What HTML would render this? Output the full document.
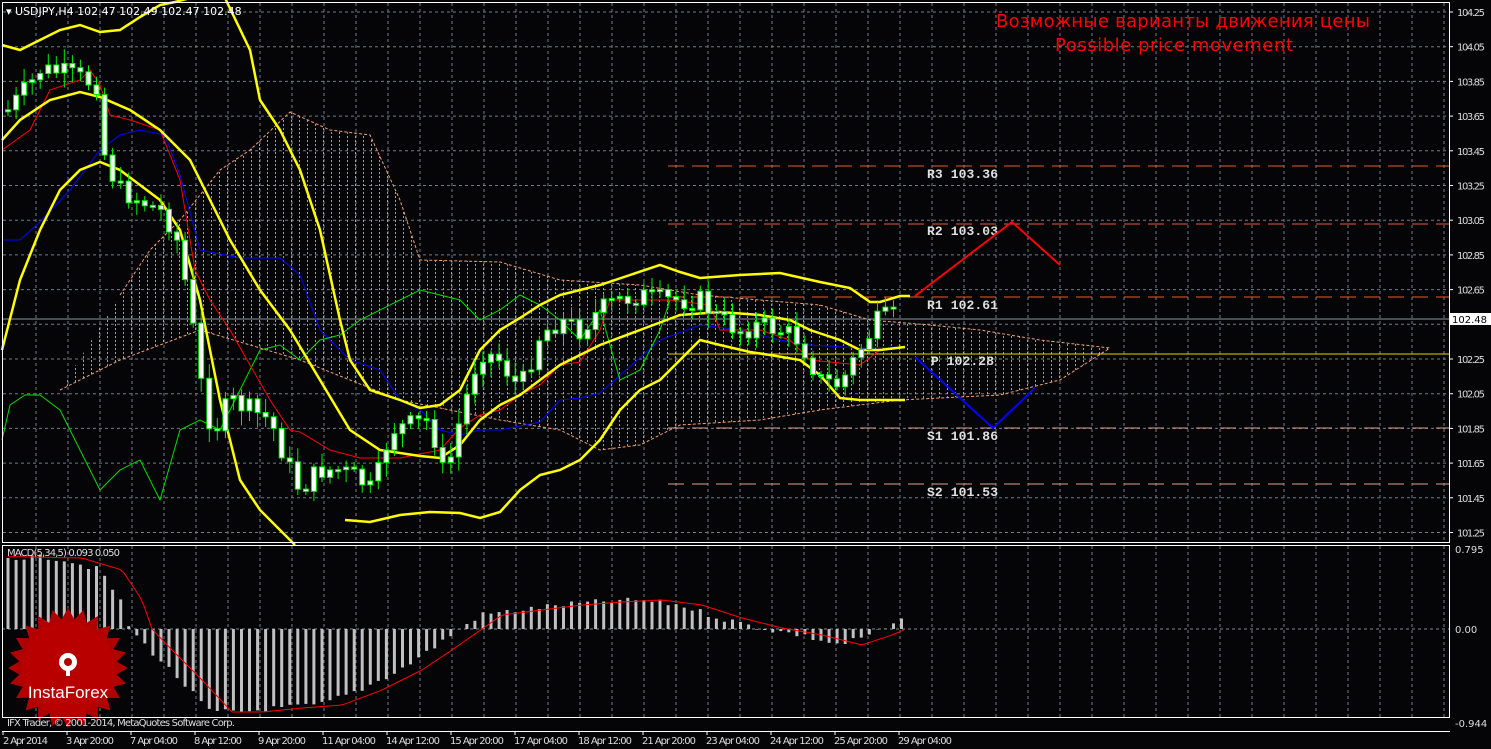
<!DOCTYPE html>
<html><head><meta charset="utf-8"><style>
html,body{margin:0;padding:0;background:#000;width:1491px;height:749px;overflow:hidden}
svg{display:block}
text{font-family:"DejaVu Sans","Liberation Sans",sans-serif}
text.mono{font-family:"Liberation Mono",monospace;font-weight:bold}
</style></head><body>
<svg id="s" width="1491" height="749" viewBox="0 0 1491 749" xmlns="http://www.w3.org/2000/svg">
<defs>
<pattern id="hatch" width="8" height="4" patternUnits="userSpaceOnUse">
<rect x="3" y="0" width="1" height="2" fill="#bbb"/>
</pattern>
</defs>
<rect width="1491" height="749" fill="#050508"/>
<g id="grid" stroke="#6f7d8c" stroke-width="1" stroke-dasharray="3,3"></g>
<polygon fill="url(#hatch)" opacity="0.85" points="120,295 150,250 180,220 220,170 250,150 290,112 330,130 370,135 400,200 420,260 500,262 560,280 640,285 700,295 760,300 820,305 870,320 930,325 980,330 1040,340 1110,348 1060,380 1000,395 900,400 820,410 760,420 680,425 640,445 600,450 560,430 500,420 400,400 300,360 200,330 120,360 60,390"/>
<polyline fill="none" stroke="#f0a070" stroke-dasharray="3,2" points="120,295 150,250 180,220 220,170 250,150 290,112 330,130 370,135 400,200 420,260 500,262 560,280 640,285 700,295 760,300 820,305 870,320 930,325 980,330 1040,340 1110,348"/>
<polyline fill="none" stroke="#f0a070" stroke-dasharray="3,2" points="60,390 120,360 200,330 300,360 400,400 500,420 560,430 600,450 640,445 680,425 760,420 820,410 900,400 1000,395 1060,380 1110,348"/>
<g stroke-dasharray="16,8" stroke-width="1">
<line x1="668" y1="166" x2="1449" y2="166" stroke="#e8602a"/>
<line x1="668" y1="224" x2="1449" y2="224" stroke="#e8602a"/>
<line x1="668" y1="297" x2="1449" y2="297" stroke="#e8602a"/>
<line x1="668" y1="428" x2="1449" y2="428" stroke="#e0a090"/>
<line x1="668" y1="484" x2="1449" y2="484" stroke="#e0a090"/>
</g>
<line x1="668" y1="354" x2="1449" y2="354" stroke="#f0d000"/>
<line x1="2" y1="319" x2="1449" y2="319" stroke="#8899aa"/>
<g fill="#e0e0e0" font-size="13">
<text class="mono" x="927" y="178" textLength="71">R3 103.36</text>
<text class="mono" x="927" y="235" textLength="71">R2 103.03</text>
<text class="mono" x="927" y="309" textLength="71">R1 102.61</text>
<text class="mono" x="931" y="365" textLength="63">P 102.28</text>
<text class="mono" x="927" y="440" textLength="71">S1 101.86</text>
<text class="mono" x="927" y="496" textLength="71">S2 101.53</text>
</g>
<polyline fill="none" stroke="#0000ff" stroke-width="1" points="2,240 20,240 40,222 70,190 100,150 120,135 140,130 165,135 180,175 200,250 240,258 280,258 300,275 320,330 350,360 380,370 400,400 420,410 440,430 460,435 480,430 500,430 540,422 560,400 580,398 600,393 660,340 700,325 740,330 780,340 810,345 860,348 905,347"/>
<polyline fill="none" stroke="#00dd00" stroke-width="1" points="2,440 10,405 25,395 40,395 60,410 80,450 100,490 120,470 140,460 160,500 180,430 200,420 220,430 240,390 260,350 280,345 300,360 320,340 340,335 360,320 380,310 400,300 420,290 440,295 460,300 480,320 500,310 520,295 540,305 560,320 580,340 600,310 620,380 640,370 660,330 670,300"/>
<polyline fill="none" stroke="#ff0000" stroke-width="1" points="2,150 30,130 50,90 80,80 90,70 100,85 110,115 130,120 160,130 180,180 195,270 210,300 230,330 250,365 270,400 290,430 300,432 330,450 360,458 400,458 440,450 460,428 480,415 500,410 520,395 540,385 560,365 580,362 600,330 610,300 640,300 670,300 710,305 720,330 760,330 790,340 810,360 860,365 880,350 905,347"/>
<g fill="none" stroke="#ffff00" stroke-width="2.5">
<polyline points="2,45 20,50 40,40 60,30 80,25 100,32 120,30 140,17 160,5 175,2 190,-2"/>
<polyline points="225,-2 250,50 260,100 280,130 300,170 320,230 340,320 350,360 370,390 400,400 420,408 440,405 460,390 480,350 500,330 520,318 540,305 560,295 580,290 600,285 630,275 660,265 680,272 700,278 740,275 780,273 820,282 850,288 870,302 880,302 900,296 910,296"/>
<polyline points="2,140 20,120 50,100 80,92 100,97 130,110 160,130 190,160 210,200 230,240 260,290 290,330 320,380 350,430 380,450 420,456 440,458 460,445 480,420 500,405 520,395 540,380 560,365 580,355 600,345 640,330 680,315 720,312 760,315 790,320 810,330 840,340 860,350 880,350 905,347"/>
<polyline points="2,350 20,280 40,230 60,190 80,170 100,162 120,170 140,185 160,200 180,230 200,300 220,400 240,480 260,510 280,530 295,545"/>
<polyline points="345,520 370,522 400,515 430,512 460,513 480,518 500,512 520,490 540,475 560,470 580,460 600,440 620,410 640,390 660,380 680,360 700,340 720,345 750,352 770,355 800,360 820,375 840,398 860,400 905,400"/>
</g>
<g id="candles"></g>
<polyline fill="none" stroke="#ff0000" stroke-width="2" points="915,296 1012,222 1060,265"/>
<polyline fill="none" stroke="#0000ff" stroke-width="2" points="915,357 993,428 1035,388"/>
<text x="996" y="27" font-size="18" fill="#ff0000" textLength="374">Возможные варианты движения цены</text>
<text x="1055" y="51" font-size="18" fill="#ff0000" textLength="238">Possible price movement</text>
<text x="6" y="15" font-size="11" fill="#fff">▾ USDJPY,H4  102.47 102.49 102.47 102.48</text>
<line x1="2" y1="629" x2="1449" y2="629" stroke="#7b8a99" stroke-dasharray="3,3"/>
<g id="macd"></g>
<polyline id="sig" fill="none" stroke="#ff0000" stroke-width="1"/>
<g transform="translate(68,668)">
<polygon id="star" fill="#b00000"/>
<circle r="46" fill="#c00000" opacity="0.6"/>
<g fill="#fff">
<circle cx="0" cy="-6" r="9"/>
<rect x="-2" y="-6" width="4" height="14"/>
</g>
<circle cx="0" cy="-6" r="4" fill="#b00000"/>
<text x="0" y="30" text-anchor="middle" font-size="17" fill="#fff" style="font-family:'Liberation Sans',sans-serif">InstaForex</text>
</g>
<text x="7" y="726" font-size="10" fill="#ddd" textLength="228">IFX Trader, © 2001-2014, MetaQuotes Software Corp.</text>
<text x="7" y="556" font-size="10" fill="#ddd" textLength="113">MACD(5,34,5) 0.093 0.050</text>
<rect x="2.5" y="2.5" width="1447" height="540" fill="none" stroke="#fff"/>
<rect x="2.5" y="545.5" width="1447" height="172" fill="none" stroke="#fff"/>
<line x1="2" y1="731.5" x2="1450" y2="731.5" stroke="#fff"/>
<rect x="1450" y="313" width="41" height="12" fill="#fff"/>
<text x="1452" y="323" font-size="10" fill="#000">102.48</text>
<g id="axis" font-size="10" fill="#ddd"></g>
</svg>
<script>
var NS="http://www.w3.org/2000/svg",s=document.getElementById('s');
function el(p,t,a,txt){var e=document.createElementNS(NS,t);for(var k in a)e.setAttribute(k,a[k]);if(txt)e.textContent=txt;p.appendChild(e);return e;}
var g=document.getElementById('grid');
for(var x=36;x<1449;x+=32){el(g,'line',{x1:x,y1:3,x2:x,y2:543});el(g,'line',{x1:x,y1:546,x2:x,y2:718});}
var ax=document.getElementById('axis');
var labs=["104.25","104.05","103.85","103.65","103.45","103.25","103.05","102.85","102.65","102.45","102.25","102.05","101.85","101.65","101.45","101.25"];
for(var i=0;i<16;i++){var y=12+i*34.7;el(g,'line',{x1:3,y1:y,x2:1449,y2:y});if(i!=9)el(ax,'text',{x:1457,y:y+4,textLength:28},labs[i]);el(s,'line',{x1:1450,y1:y,x2:1453,y2:y,stroke:'#fff'});}
el(ax,'text',{x:1455,y:553},"0.795");el(ax,'text',{x:1455,y:633},"0.00");el(ax,'text',{x:1455,y:727},"-0.944");
var d=["2 Apr 2014","3 Apr 20:00","7 Apr 04:00","8 Apr 12:00","9 Apr 20:00","11 Apr 04:00","14 Apr 12:00","15 Apr 20:00","17 Apr 04:00","18 Apr 12:00","21 Apr 20:00","23 Apr 04:00","24 Apr 12:00","25 Apr 20:00","29 Apr 04:00"];
for(var i=0;i<d.length;i++){var w=d[i].length>11?54:48;el(ax,'text',{x:(i==0?3:67+(i-1)*64-1),y:744,textLength:(i==0?45:w)},d[i]);el(s,'line',{x1:3+i*64,y1:731,x2:3+i*64,y2:735,stroke:'#fff'});}
var pts=[[8,110],[30,85],[40,70],[60,72],[100,85],[105,160],[120,190],[140,200],[160,210],[175,230],[185,280],[195,340],[205,410],[215,430],[230,400],[250,410],[270,420],[290,470],[300,490],[320,470],[340,470],[360,480],[370,490],[380,470],[390,430],[410,425],[430,420],[445,480],[460,420],[480,350],[500,360],[520,390],[540,335],[560,320],[580,330],[600,310],[620,300],[640,295],[660,300],[680,300],[700,300],[720,320],[740,330],[760,325],[780,330],[800,340],[820,380],[840,385],[860,350],[880,318],[895,318]];
function py(x){for(var i=1;i<pts.length;i++){if(x<=pts[i][0]){var a=pts[i-1],b=pts[i];return a[1]+(b[1]-a[1])*(x-a[0])/(b[0]-a[0]);}}return 318;}
var cg=document.getElementById('candles'),prev=110,seed=7;
function rnd(){seed=(seed*9301+49297)%233280;return seed/233280;}
for(var x=8;x<=895;x+=8.05){var c=py(x)+(rnd()-0.5)*22,o=prev;var t=Math.min(o,c),b=Math.max(o,c);if(b-t<2)b=t+2;
el(cg,'line',{x1:x.toFixed(1),y1:(t-3-rnd()*12).toFixed(1),x2:x.toFixed(1),y2:(b+3+rnd()*12).toFixed(1),stroke:'#00ee00'});
el(cg,'rect',{x:(x-2.5).toFixed(1),y:t.toFixed(1),width:5,height:(b-t).toFixed(1),fill:'#fff',stroke:'#00ee00','stroke-width':1});prev=c;}
var mp=[[8,557],[60,558],[100,570],[120,600],[130,629],[150,650],[180,680],[210,712],[240,712],[280,708],[320,705],[360,690],[400,670],[430,650],[460,629],[480,615],[520,610],[560,605],[600,602],[640,600],[680,605],[720,618],[760,628],[800,635],[840,645],[870,635],[905,620]];
function my(x){for(var i=1;i<mp.length;i++){if(x<=mp[i][0]){var a=mp[i-1],b=mp[i];return a[1]+(b[1]-a[1])*(x-a[0])/(b[0]-a[0]);}}return 620;}
var mg=document.getElementById('macd');
for(var x=8;x<=905;x+=8.05){var y=my(x)+(rnd()-0.5)*6;var t=Math.min(y,629),h=Math.abs(y-629);el(mg,'rect',{x:(x-1.5).toFixed(1),y:t.toFixed(1),width:3,height:h.toFixed(1),fill:'#c0c0c0'});}
var sp=[];for(var x=8;x<=905;x+=4){sp.push(x+','+(my(x-22)).toFixed(1));}
document.getElementById('sig').setAttribute('points',sp.join(' '));
var st=[];for(var i=0;i<48;i++){var r=i%2?49:60,a=i*Math.PI/24;st.push((r*Math.cos(a)).toFixed(1)+','+(r*Math.sin(a)).toFixed(1));}
document.getElementById('star').setAttribute('points',st.join(' '));
</script>
</body></html>
